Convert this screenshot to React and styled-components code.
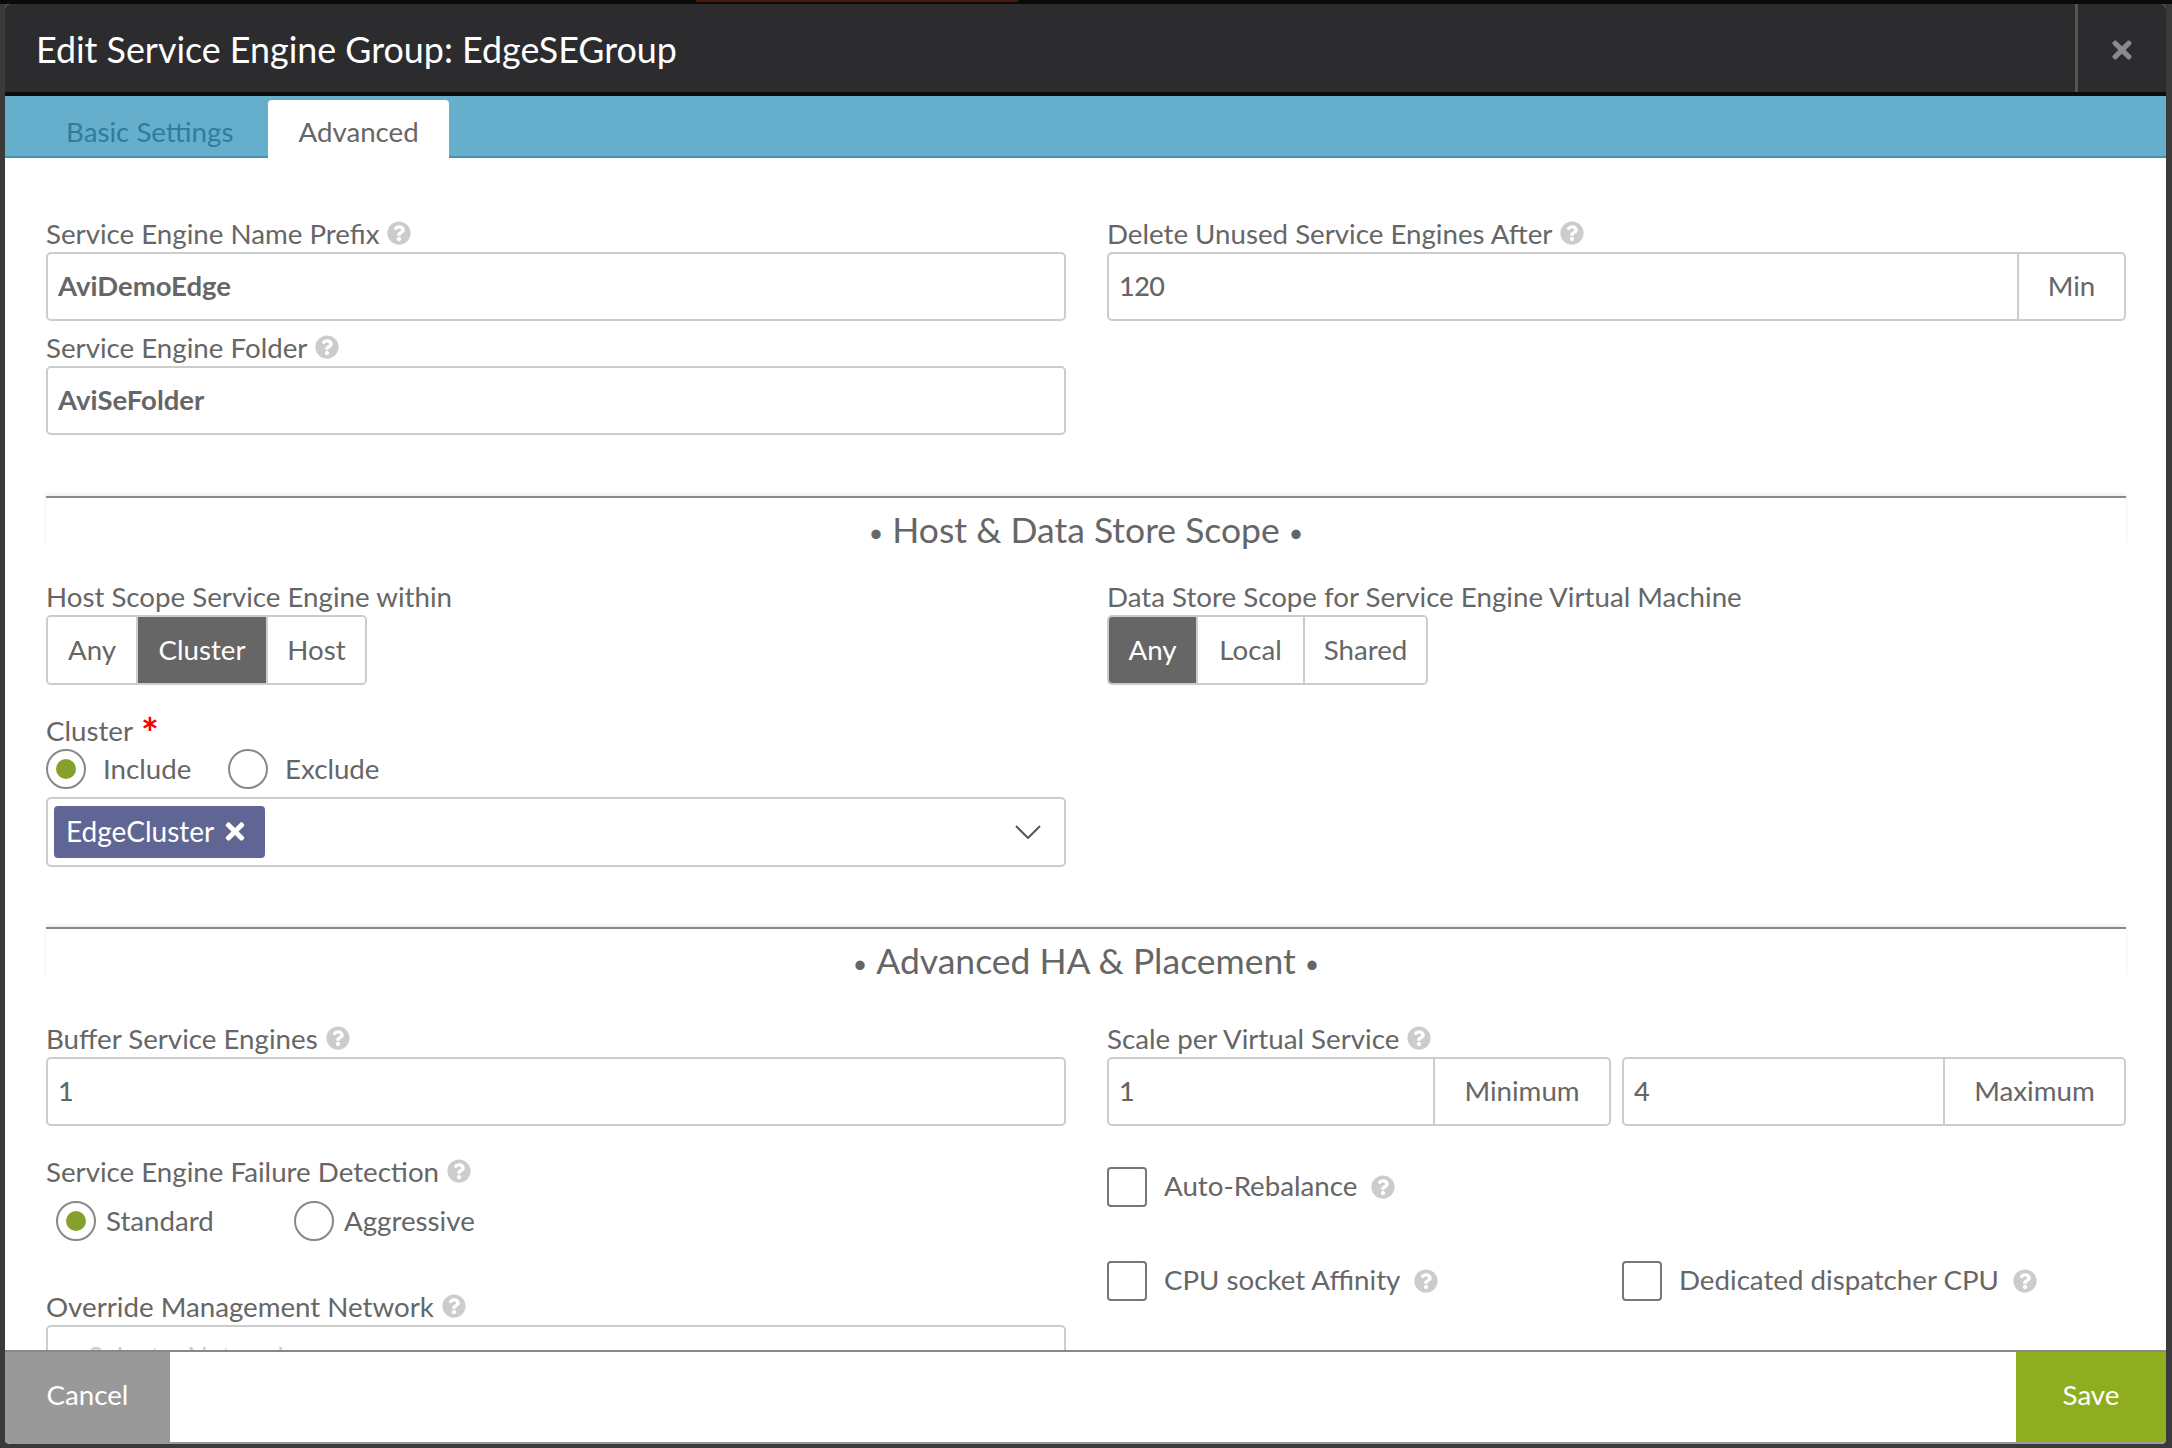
import React from "react";
import styled, { createGlobalStyle } from "styled-components";
import { FaQuestionCircle, FaTimes } from "react-icons/fa";

const GlobalStyle = createGlobalStyle`
  html, body {
    margin: 0;
    padding: 0;
    background: #3a3a3a;
    font-family: Lato, "Open Sans", sans-serif;
    color: #666;
  }
  * { box-sizing: border-box; }
`;

const Page = styled.div`
  width: 2172px;
  height: 1448px;
  overflow: hidden;
  background: #3a3a3a;
`;

const TopEdge = styled.div`
  height: 4px;
  background: #0a0a0a;
  &::before {
    content: "";
    display: block;
    width: 322px;
    height: 2px;
    margin-left: 696px;
    background: #4a1a0a;
  }
`;

const Modal = styled.div`
  width: 2161px;
  height: 1440px;
  margin-left: 5px;
  display: flex;
  flex-direction: column;
  background: #fff;
  border-radius: 5px;
  overflow: hidden;
`;

const Header = styled.div`
  flex: none;
  height: 92px;
  display: flex;
  align-items: stretch;
  background: #2c2c2e;
  border-bottom: 4px solid #0c0c0c;
`;

const Title = styled.h1`
  flex: 1;
  margin: 0;
  padding-left: 31px;
  font-size: 35.85px;
  line-height: 92px;
  font-weight: 400;
  color: #fff;
`;

const Close = styled.div`
  width: 91px;
  padding-top: 3px;
  display: flex;
  align-items: center;
  justify-content: center;
  border-left: 3px solid #555;
  color: #8a8a8e;
  font-size: 28px;
`;

const TabBar = styled.div`
  flex: none;
  height: 62px;
  display: flex;
  align-items: flex-end;
  padding-left: 31px;
  background: #66afcc;
  border-bottom: 2px solid #4a90ae;
`;

const Tab = styled.div`
  height: ${(p) => (p.$active ? "58px" : "56px")};
  margin-bottom: ${(p) => (p.$active ? "-2px" : "0")};
  margin-right: ${(p) => (p.$active ? "0" : "5px")};
  padding: ${(p) => (p.$active ? "4px" : "6px")} 30px 0;
  display: flex;
  align-items: center;
  font-size: 27.7px;
  border-radius: 4px 4px 0 0;
  color: ${(p) => (p.$active ? "#666" : "#2f7c9e")};
  background: ${(p) => (p.$active ? "#fff" : "transparent")};
`;

const Body = styled.div`
  flex: 1;
  min-height: 0;
  overflow: hidden;
  padding: 60px 40px 0 41px;
`;

const Columns = styled.div`
  display: grid;
  grid-template-columns: 1020px 1019px;
  column-gap: 41px;
  margin-top: ${(p) => p.$mt ?? 0}px;
`;

const Field = styled.div`
  margin-top: ${(p) => p.$mt ?? 0}px;
  margin-bottom: ${(p) => p.$mb ?? 0}px;
`;

const Label = styled.div`
  height: 34px;
  padding-bottom: 2px;
  margin-top: ${(p) => p.$mt ?? 0}px;
  display: flex;
  align-items: center;
  gap: 8px;
  font-size: 27.7px;
  line-height: 32px;
  color: #666;
  white-space: nowrap;
`;

const Help = styled(FaQuestionCircle)`
  flex: none;
  width: 24px;
  height: 24px;
  color: #ccc;
  margin-bottom: 3px;
`;

const Star = styled.span`
  color: #f00;
  font-size: 42px;
  line-height: 34px;
  font-weight: 700;
  margin-top: 4px;
`;

const InputBox = styled.div`
  height: 69px;
  display: flex;
  align-items: stretch;
  border: 2px solid #ccc;
  border-radius: 5px;
  overflow: hidden;
  background: #fff;
`;

const Value = styled.div`
  flex: 1;
  padding: 0 0 2px 10px;
  display: flex;
  align-items: center;
  font-size: ${(p) => (p.$bold ? "27.5px" : "27px")};
  letter-spacing: ${(p) => (p.$bold ? "0" : "-0.5px")};
  font-weight: ${(p) => (p.$bold ? 700 : 500)};
  color: #666;
`;

const Placeholder = styled(Value)`
  padding: 0 0 6px 40px;
  color: #ccc;
  font-weight: 400;
  letter-spacing: 0;
`;

const Addon = styled.div`
  flex: none;
  width: ${(p) => p.$w}px;
  padding-bottom: 2px;
  display: flex;
  align-items: center;
  justify-content: center;
  border-left: 2px solid #ccc;
  font-size: 27.7px;
  color: #666;
`;

const PairRow = styled.div`
  display: grid;
  grid-template-columns: 504px 504px;
  column-gap: 11px;
`;

const PairOffset = styled.div`
  padding-top: 34px;
`;

const Section = styled.div`
  height: 50px;
  margin-top: ${(p) => p.$mt}px;
  padding-top: 7px;
  border-top: 2px solid #888;
  box-shadow: 0 -2px 4px rgba(0, 0, 0, 0.08), inset 2px 0 2px -2px rgba(0, 0, 0, 0.06), inset -2px 0 2px -2px rgba(0, 0, 0, 0.06);
  text-align: center;
  font-size: 35.5px;
  line-height: 50px;
  color: #666;
`;

const Bullet = styled.span`
  font-size: 25px;
  vertical-align: 1px;
  margin: 0 9px;
`;

const ButtonGroup = styled.div`
  display: inline-flex;
  height: 70px;
  border: 2px solid #ccc;
  border-radius: 5px;
  overflow: hidden;
`;

const GroupButton = styled.div`
  width: ${(p) => p.$w}px;
  padding-bottom: 2px;
  display: flex;
  align-items: center;
  justify-content: center;
  font-size: 27.7px;
  color: ${(p) => (p.$active ? "#fff" : "#666")};
  background: ${(p) => (p.$active ? "#666" : "#fff")};
  & + & {
    border-left: 2px solid #ccc;
  }
`;

const RadioRow = styled.div`
  display: flex;
  align-items: center;
  height: 40px;
  margin-top: ${(p) => p.$mt ?? 0}px;
  padding-left: ${(p) => p.$pl ?? 0}px;
`;

const Radio = styled.span`
  flex: none;
  width: 40px;
  height: 40px;
  border: 2px solid #888;
  border-radius: 50%;
  display: flex;
  align-items: center;
  justify-content: center;
  background: #fff;
  &::after {
    content: "";
    display: ${(p) => (p.$on ? "block" : "none")};
    width: 20px;
    height: 20px;
    border-radius: 50%;
    background: #86a02c;
  }
`;

const OptionText = styled.span`
  width: ${(p) => p.$w}px;
  padding-left: ${(p) => p.$pl}px;
  padding-bottom: 2px;
  font-size: 27.7px;
  color: #666;
  white-space: nowrap;
`;

const SelectBox = styled.div`
  height: 70px;
  margin-top: 8px;
  padding: 0 23px 0 6px;
  display: flex;
  align-items: center;
  justify-content: space-between;
  border: 2px solid #ccc;
  border-radius: 5px;
`;

const Chip = styled.div`
  height: 52px;
  padding: 0 20px 2px 12px;
  display: flex;
  align-items: center;
  gap: 11px;
  border-radius: 4px;
  background: #5f6694;
  color: #fff;
  font-size: 28px;
`;

const ChipX = styled(FaTimes)`
  width: 20px;
  height: 27px;
`;

const CheckRow = styled.div`
  display: grid;
  grid-template-columns: 515px 504px;
  height: 40px;
  margin-top: ${(p) => p.$mt}px;
`;

const Check = styled.div`
  display: flex;
  align-items: center;
  font-size: 27.7px;
  color: #666;
  white-space: nowrap;
`;

const CheckText = styled.span`
  padding-bottom: 3px;
`;

const Box = styled.span`
  flex: none;
  width: 40px;
  height: 40px;
  margin-right: 17px;
  border: 2px solid #777;
  border-radius: 4px;
`;

const CheckHelp = styled(Help)`
  margin: 0 0 0 14px;
`;

const Footer = styled.div`
  flex: none;
  height: 94px;
  display: flex;
  justify-content: space-between;
  background: #fff;
  border-top: 2px solid #888;
  border-bottom: 2px solid #999;
`;

const FootButton = styled.div`
  width: ${(p) => p.$w}px;
  padding-bottom: 5px;
  display: flex;
  align-items: center;
  justify-content: center;
  font-size: 27.7px;
  color: #fff;
  background: ${(p) => p.$bg};
`;

function FieldLabel({ children, help = true }) {
  return (
    <Label>
      {children}
      {help && <Help />}
    </Label>
  );
}

function SectionTitle({ mt, children }) {
  return (
    <Section $mt={mt}>
      <Bullet>•</Bullet>
      {children}
      <Bullet>•</Bullet>
    </Section>
  );
}

function CheckItem({ children }) {
  return (
    <Check>
      <Box />
      <CheckText>{children}</CheckText>
      <CheckHelp />
    </Check>
  );
}

export default function App() {
  return (
    <Page>
      <GlobalStyle />
      <TopEdge />
      <Modal>
        <Header>
          <Title>Edit Service Engine Group: EdgeSEGroup</Title>
          <Close>
            <FaTimes />
          </Close>
        </Header>
        <TabBar>
          <Tab>Basic Settings</Tab>
          <Tab $active>Advanced</Tab>
        </TabBar>
        <Body>
          <Columns>
            <div>
              <Field $mb={11}>
                <FieldLabel>Service Engine Name Prefix</FieldLabel>
                <InputBox>
                  <Value $bold>AviDemoEdge</Value>
                </InputBox>
              </Field>
              <Field>
                <FieldLabel>Service Engine Folder</FieldLabel>
                <InputBox>
                  <Value $bold>AviSeFolder</Value>
                </InputBox>
              </Field>
            </div>
            <div>
              <FieldLabel>Delete Unused Service Engines After</FieldLabel>
              <InputBox>
                <Value>120</Value>
                <Addon $w={107}>Min</Addon>
              </InputBox>
            </div>
          </Columns>

          <SectionTitle mt={61}>Host &amp; Data Store Scope</SectionTitle>

          <Columns $mt={35}>
            <div>
              <FieldLabel help={false}>Host Scope Service Engine within</FieldLabel>
              <ButtonGroup>
                <GroupButton $w={88}>Any</GroupButton>
                <GroupButton $w={130} $active>Cluster</GroupButton>
                <GroupButton $w={99}>Host</GroupButton>
              </ButtonGroup>
              <Label $mt={30}>
                Cluster <Star>*</Star>
              </Label>
              <RadioRow>
                <Radio $on />
                <OptionText $w={142} $pl={17}>Include</OptionText>
                <Radio />
                <OptionText $w={120} $pl={17}>Exclude</OptionText>
              </RadioRow>
              <SelectBox>
                <Chip>
                  EdgeCluster
                  <ChipX />
                </Chip>
                <svg width="26" height="14" viewBox="0 0 26 14" fill="none" stroke="#555" strokeWidth="2">
                  <path d="M1 1l12 12L25 1" />
                </svg>
              </SelectBox>
            </div>
            <div>
              <FieldLabel help={false}>Data Store Scope for Service Engine Virtual Machine</FieldLabel>
              <ButtonGroup>
                <GroupButton $w={87} $active>Any</GroupButton>
                <GroupButton $w={107}>Local</GroupButton>
                <GroupButton $w={123}>Shared</GroupButton>
              </ButtonGroup>
            </div>
          </Columns>

          <SectionTitle mt={60}>Advanced HA &amp; Placement</SectionTitle>

          <Columns $mt={46}>
            <div>
              <Field $mb={30}>
                <FieldLabel>Buffer Service Engines</FieldLabel>
                <InputBox>
                  <Value>1</Value>
                </InputBox>
              </Field>
              <FieldLabel>Service Engine Failure Detection</FieldLabel>
              <RadioRow $pl={10} $mt={11}>
                <Radio $on />
                <OptionText $w={198} $pl={10}>Standard</OptionText>
                <Radio />
                <OptionText $w={140} $pl={10}>Aggressive</OptionText>
              </RadioRow>
              <Field $mt={50}>
                <FieldLabel>Override Management Network</FieldLabel>
                <InputBox>
                  <Placeholder>Select a Network</Placeholder>
                </InputBox>
              </Field>
            </div>
            <div>
              <PairRow>
                <div>
                  <FieldLabel>Scale per Virtual Service</FieldLabel>
                  <InputBox>
                    <Value>1</Value>
                    <Addon $w={176}>Minimum</Addon>
                  </InputBox>
                </div>
                <PairOffset>
                  <InputBox>
                    <Value>4</Value>
                    <Addon $w={181}>Maximum</Addon>
                  </InputBox>
                </PairOffset>
              </PairRow>
              <CheckRow $mt={41}>
                <CheckItem>Auto-Rebalance</CheckItem>
              </CheckRow>
              <CheckRow $mt={54}>
                <CheckItem>CPU socket Affinity</CheckItem>
                <CheckItem>Dedicated dispatcher CPU</CheckItem>
              </CheckRow>
            </div>
          </Columns>
        </Body>
        <Footer>
          <FootButton $w={165} $bg="#999">Cancel</FootButton>
          <FootButton $w={150} $bg="#8fae1f">Save</FootButton>
        </Footer>
      </Modal>
    </Page>
  );
}
